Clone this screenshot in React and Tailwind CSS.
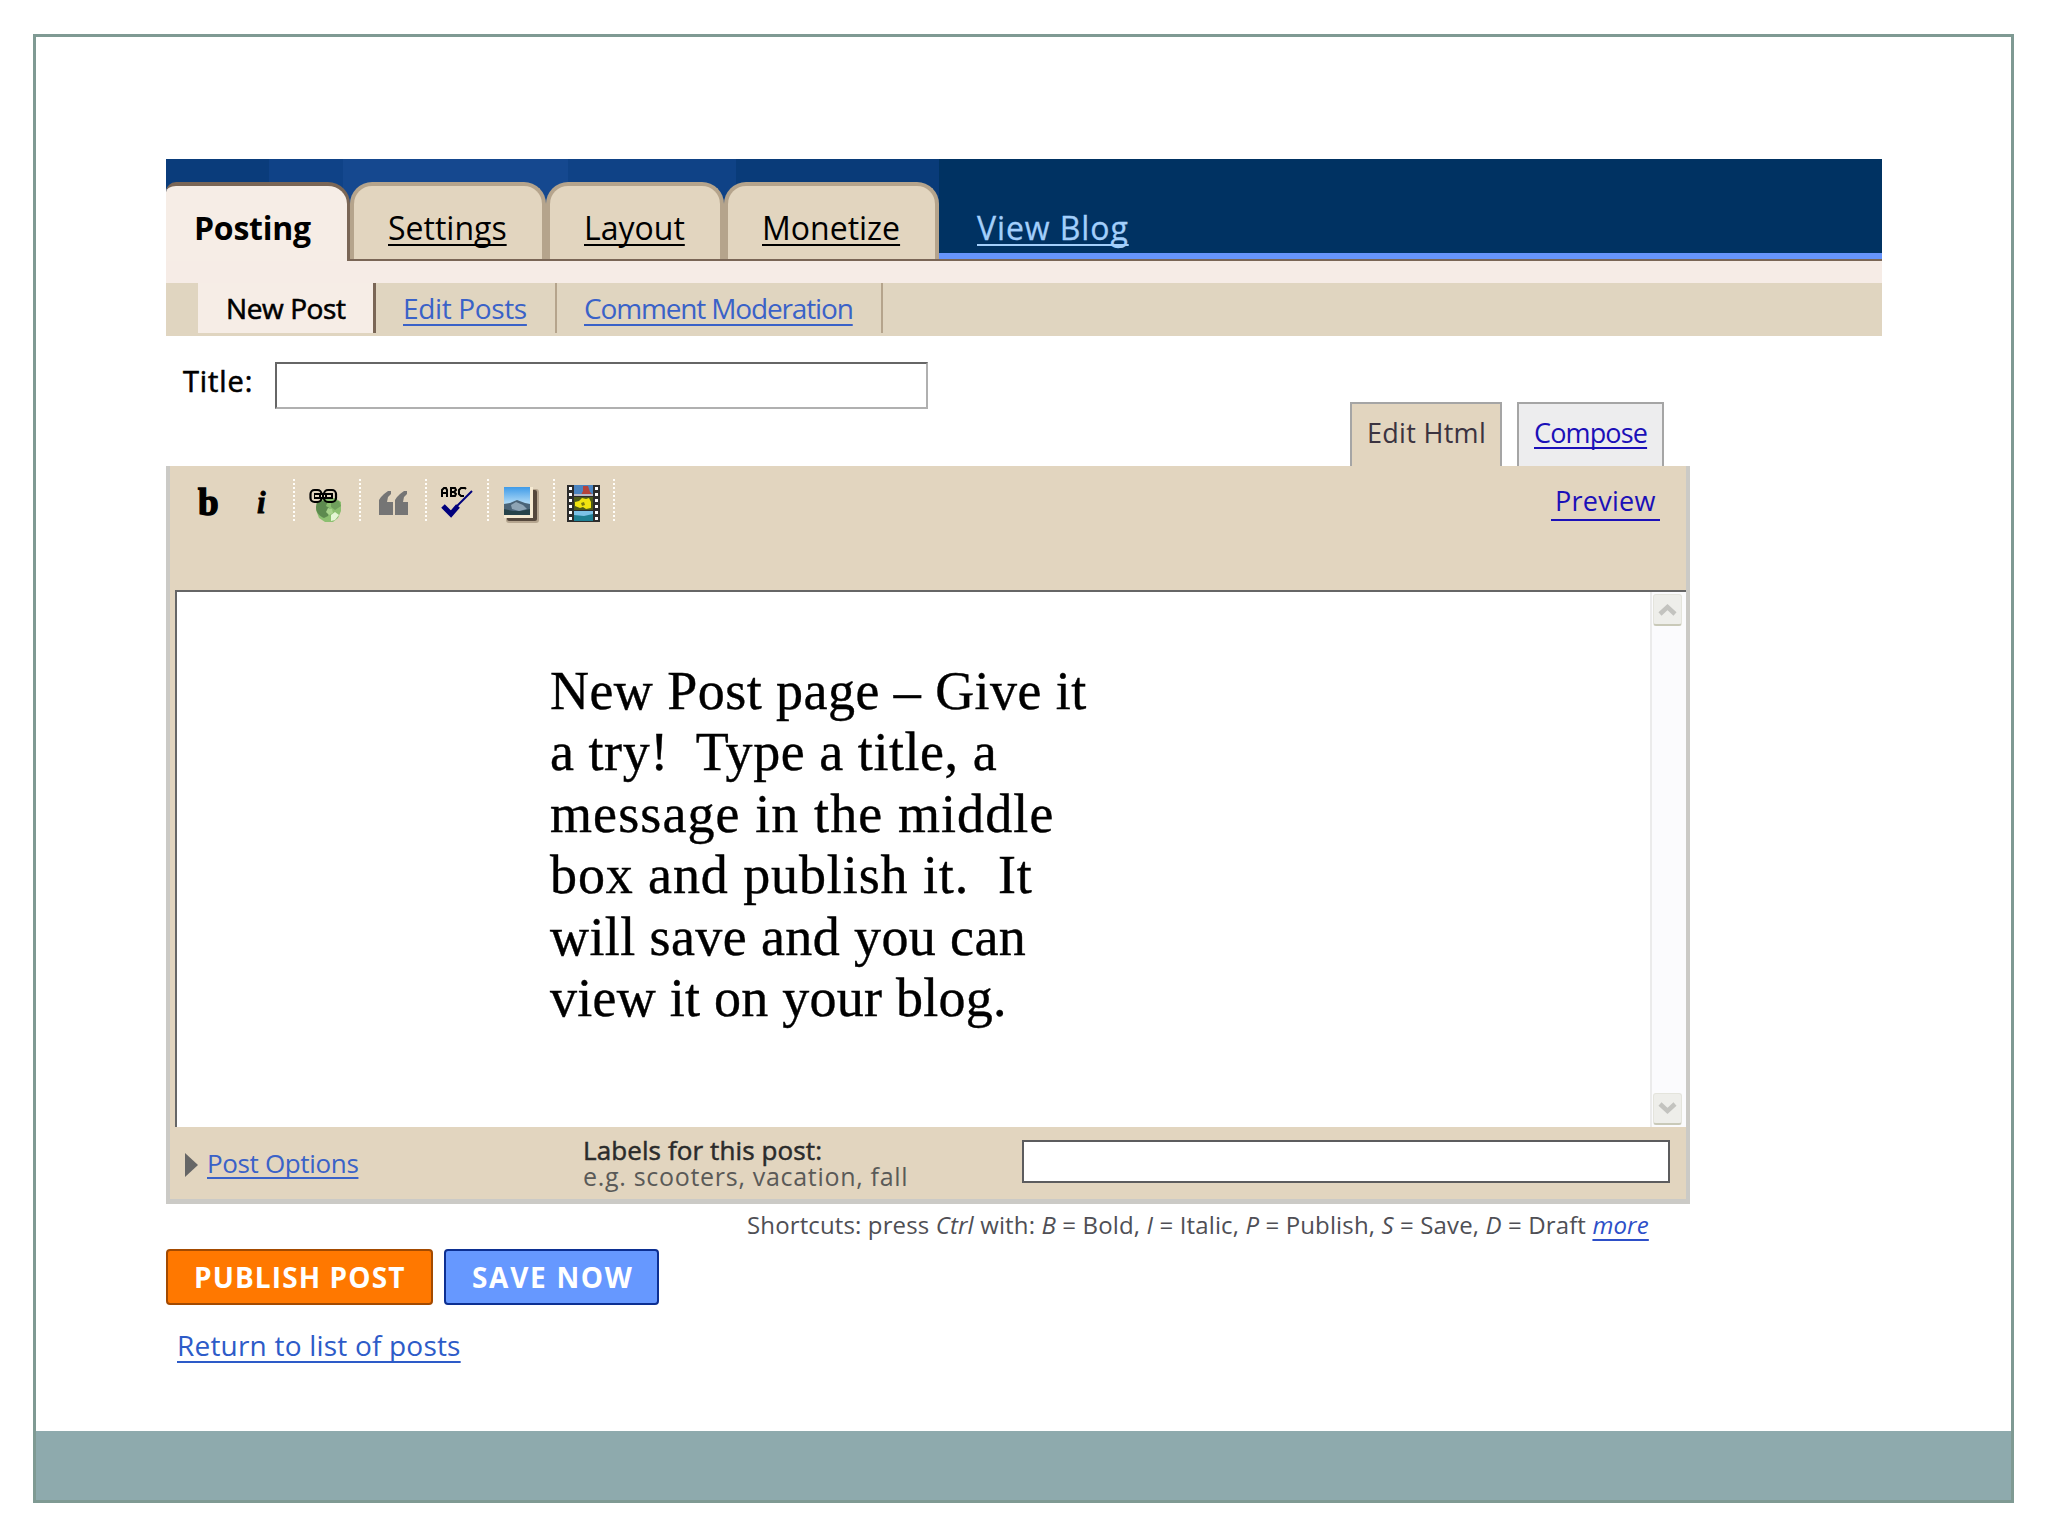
import React from "react";

const T = ({ className = "", children }) => (
  <span className={"inline-block whitespace-pre " + className}>{children}</span>
);

const LINK = " underline decoration-2 [text-decoration-skip-ink:none] ";

const Tab = ({ className, children }) => (
  <div className={"h-[77px] shrink-0 rounded-t-[22px] border-x-4 border-t-4 border-[#b5a48c] bg-[#e2d5bf] pt-[22px] text-[32px] leading-[40px] text-black " + className}>
    {children}
  </div>
);

const Divider = () => (
  <div className="h-[42px] w-[2px] shrink-0 bg-[repeating-linear-gradient(180deg,#fffdf8_0_2px,transparent_2px_4px)]" />
);

const LinkIcon = () => (
  <svg width="34" height="35" viewBox="0 0 34 35">
    <path d="M14 10h12l6 4v9l-3 7-5 4h-8l-6-4-3-8 1-7z" fill="#8cbf70" />
    <path d="M8 13h11l-2 5 5 3-3 7-4 2c-5-2-8-6-8-11z" fill="#5d8a4f" />
    <path d="M22 13h8l2 5-6 4-4-3z" fill="#6f9f5c" />
    <path d="M22 27l4-3 4 3-4 5-4 1z" fill="#e4f6d4" />
    <path d="M19 20l4 1 1 4-4 2-3-3z" fill="#a9d48d" />
    <g fill="none" stroke="#000" strokeWidth="2.2">
      <rect x="1.500" y="2" width="11" height="12" rx="4" />
      <rect x="15" y="2" width="12" height="12" rx="4" />
      <path d="M5 8h19" strokeWidth="6" />
      <path d="M6 8h4M12 8h1M15 8h1M18 8h4" stroke="#e2d5bf" strokeWidth="2" />
    </g>
  </svg>
);

const QuoteIcon = () => (
  <svg width="30" height="25" viewBox="0 0 30 25" fill="#757575">
    <path d="M0 24V9l2-3 3-3 4-3h3v3l-3 3-1 5h6v13z" />
    <path d="M16 24V9l2-3 3-3 4-3h3v3l-3 3-1 5h5v13z" />
  </svg>
);

const SpellIcon = () => (
  <svg width="32" height="33" viewBox="0 0 32 33" fill="none">
    <g stroke="#000" strokeWidth="2">
      <path d="M1 11V4l2-2h2l1 2v7M1 7h5" />
      <path d="M10 1v10M10 2h4l1 2-2 2h-3M13 6l2 2-1 2h-4" />
      <path d="M25 3l-1-1h-4l-2 2v4l2 2h3" />
    </g>
    <path d="M31 5L13 23" stroke="#00007c" strokeWidth="2" />
    <path d="M2 20l8 8 7-8" stroke="#00007c" strokeWidth="5" />
  </svg>
);

const PhotoIcon = () => (
  <svg width="37" height="38" viewBox="0 0 37 38">
    <defs>
      <linearGradient id="sky" x1="0" y1="0" x2="0" y2="1">
        <stop offset="0" stopColor="#3f9be8" />
        <stop offset="0.55" stopColor="#a9d6f5" />
        <stop offset="1" stopColor="#a9d6f5" />
      </linearGradient>
    </defs>
    <rect x="3" y="3" width="33" height="34" rx="3" fill="#b5a58f" />
    <rect x="4" y="4" width="30" height="31" rx="2" fill="#55483c" />
    <path d="M1 1h29v31H1z" fill="#f6ead2" />
    <path d="M1 1h26v28H1z" fill="url(#sky)" />
    <path d="M1 18l6-1 7-3 8 3 5 1v11H1z" fill="#4a6377" />
    <path d="M8 19l5-3 7 3 4 4-8 2-7-2z" fill="#8ea4b5" />
    <path d="M1 23l9 2h8l9-2v6H1z" fill="#27434a" />
  </svg>
);

const FilmIcon = () => (
  <svg width="33" height="37" viewBox="0 0 33 37">
    <path d="M0 0h33v37H0z" fill="#2c2c2c" />
    <path d="M7 0h19v11H7z" fill="#4b84c0" />
    <path d="M16 1h5l2 6 3 3H14l2-4z" fill="#b5433a" />
    <path d="M7 9h19v2H7z" fill="#b9b9c6" />
    <path d="M7 12h19v13H7z" fill="#4e5a18" />
    <path d="M8 17l4-1 3-3 4 1 3-1 2 4v6l-5 1-3-2-3 1-5-2z" fill="#f1e410" />
    <path d="M14 18l3-1 1 3-3 1z" fill="#7d7c10" />
    <path d="M7 26h19v10H7z" fill="#1f7f93" />
    <path d="M7 26h19v3l-9 2-10-1z" fill="#7cc1e6" />
    {[2, 8, 14, 20, 26, 32].map((y) => (
      <g key={y} fill="#fff">
        <path d={`M2 ${y}h3v3h-3z`} />
        <path d={`M28 ${y}h3v3h-3z`} />
      </g>
    ))}
  </svg>
);

const ScrollButton = ({ d }) => (
  <div className="flex h-[32px] w-[29px] items-center justify-center rounded-[3px] border border-b-2 border-[#e4e4dc] border-b-[#c9c9b8] bg-[#eeeeea]">
    <svg width="19" height="13" viewBox="0 0 19 13" fill="none" stroke="#c3c3bf" strokeWidth="4.500">
      <path d={d} />
    </svg>
  </div>
);

const MESSAGE = [
  ["New Post page – Give it", "tracking-[0.45px]"],
  ["a try!  Type a title, a", "tracking-[0.55px]"],
  ["message in the middle", "tracking-[1.1px]"],
  ["box and publish it.  It", "tracking-[0.9px]"],
  ["will save and you can", "tracking-[0.4px]"],
  ["view it on your blog.", "tracking-[0.25px]"],
];

export default function App() {
  return (
    <div className="h-[1536px] w-[2048px] overflow-hidden bg-white pl-[33px] pt-[34px] font-['Open_Sans','Noto_Sans',sans-serif]">
      <div className="flex h-[1469px] w-[1981px] flex-col border-[3px] border-[#7f9a93]">
        <div className="pl-[130px] pt-[122px]">
          <header className="flex h-[102px] w-[1716px] items-end bg-[linear-gradient(90deg,#0a3c7b_0_103px,#0f4287_103px_177px,#15488f_177px_402px,#0f4286_402px_570px,#093b79_570px_773px,#003262_773px)]">
            <div className="h-[79px] w-[184px] shrink-0 rounded-tl-[10px] rounded-tr-[22px] border-r-[3px] border-t-4 border-[#7a6656] bg-[#f6ede6] pl-[28px] pt-[22px] text-[32px] font-bold leading-[40px]">
              <T className="tracking-[-0.25px]">Posting</T>
            </div>
            <div className="flex h-[79px] min-w-0 flex-1 items-end border-b-2 border-[#7a6656]">
              <Tab className="w-[196px] pl-[34px]"><T className={LINK + "underline-offset-[4px]"}>Settings</T></Tab>
              <Tab className="w-[178px] pl-[34px]"><T className={LINK + "underline-offset-[4px]"}>Layout</T></Tab>
              <Tab className="w-[215px] pl-[34px]"><T className={LINK + "underline-offset-[4px]"}>Monetize</T></Tab>
              <div className="h-[77px] flex-1 border-b-[6px] border-[#6694fb] pl-[38px] pt-[26px] text-[32px] leading-[40px] text-[#a3cffb] [-webkit-text-stroke:0.3px]">
                <T className={LINK + "tracking-[0.9px] underline-offset-[4px]"}>View Blog</T>
              </div>
            </div>
          </header>
          <div className="h-[22px] w-[1716px] bg-[#f6ece6]" />
          <nav className="flex h-[53px] w-[1716px] bg-[#e0d5c0] pl-[32px] text-[28px] leading-[50px] text-[#3a62c8]">
            <div className="h-[50px] w-[178px] border-r-[3px] border-[#7a6656] bg-[#f6ede6] pl-[28px] text-black [-webkit-text-stroke:0.6px_#000]"><T className="tracking-[-0.4px]">New Post</T></div>
            <div className="h-[50px] w-[181px] border-r-2 border-[#b5a48c] pl-[27px]"><T className={LINK + "tracking-[-0.35px] underline-offset-[5px]"}>Edit Posts</T></div>
            <div className="h-[50px] w-[326px] border-r-2 border-[#b5a48c] pl-[27px]"><T className={LINK + "tracking-[-1.15px] underline-offset-[5px]"}>Comment Moderation</T></div>
          </nav>

          <div className="flex h-[130px] w-[1524px] items-start pt-[25px]">
            <div className="w-[109px] pl-[17px] text-[29px] leading-[39px] [-webkit-text-stroke:0.6px_#000]"><T className="tracking-[0.9px]">Title:</T></div>
            <div className="mt-[1px] h-[47px] w-[653px] border-2 border-b-[#b0b0b0] border-l-[#666] border-r-[#b0b0b0] border-t-[#666] bg-white" />
            <div className="ml-[422px] mt-[41px] h-[64px] w-[152px] border-x-2 border-t-2 border-[#a5a5a5] bg-[#e2d5bf] pl-[15px] pt-[9px] text-[27px] leading-[40px] text-[#3b3340]"><T className="tracking-[0.3px]">Edit Html</T></div>
            <div className="ml-[15px] mt-[41px] h-[64px] w-[147px] border-x-2 border-t-2 border-[#a5a5a5] bg-[#ededee] pl-[15px] pt-[9px] text-[27px] leading-[40px] text-[#1b10b8]"><T className={LINK + "tracking-[-0.85px] underline-offset-[4px]"}>Compose</T></div>
          </div>

          <section className="h-[738px] w-[1524px] border-x-[4px] border-b-[5px] border-[#cbcac6] bg-[#e2d5bf]">
            <div className="flex h-[124px] items-start pt-[13px]">
              <div className="flex h-[42px] w-[123px] items-center pl-[28px] pt-[4px] font-['Liberation_Serif',serif] text-[37px] font-bold leading-none text-black">
                <span className="w-[59px] [-webkit-text-stroke:1.5px_#000]">b</span>
                <span className="text-[31px] italic [-webkit-text-stroke:0.8px_#000]">i</span>
              </div>
              <Divider />
              <div className="w-[64px] pl-[14px] pt-[9px]"><LinkIcon /></div>
              <Divider />
              <div className="w-[64px] pl-[18px] pt-[12px]"><QuoteIcon /></div>
              <Divider />
              <div className="w-[60px] pl-[14px] pt-[7px]"><SpellIcon /></div>
              <Divider />
              <div className="w-[64px] pl-[14px] pt-[7px]"><PhotoIcon /></div>
              <Divider />
              <div className="w-[58px] pl-[12px] pt-[6px]"><FilmIcon /></div>
              <Divider />
              <div className="ml-[936px] mt-[3px] h-[39px] w-[109px] border-b-2 border-[#1b10b8] pl-[4px] text-[27px] leading-[38px] text-[#1b10b8]"><T className="tracking-[0.25px]">Preview</T></div>
            </div>
            <div className="ml-[5px] flex h-[537px] w-[1511px] justify-between border-l-2 border-t-2 border-[#666] bg-white">
              <div className="pl-[373px] pt-[69px] font-['Liberation_Serif',serif] text-[54px] leading-[61.4px] text-black [-webkit-text-stroke:0.4px_#000]">
                {MESSAGE.map(([line, tracking]) => (
                  <div key={line}><T className={tracking}>{line}</T></div>
                ))}
              </div>
              <div className="flex w-[36px] flex-col items-start justify-between border-l-2 border-[#ebebeb] bg-[#fbfbfd] py-[2px] pl-px">
                <ScrollButton d="M2 11l7.500-7 7.500 7" />
                <ScrollButton d="M2 2l7.500 7 7.500-7" />
              </div>
            </div>
            <div className="flex h-[72px]">
              <div className="flex w-[413px] pl-[15px] pt-[26px]">
                <svg width="13" height="24" viewBox="0 0 13 24"><path d="M0 0l13 12L0 24z" fill="#666" /></svg>
                <div className="-mt-[10px] pl-[9px] text-[26px] leading-[40px] text-[#3a62c8]"><T className={LINK + "tracking-[-0.35px] underline-offset-[4px]"}>Post Options</T></div>
              </div>
              <div className="w-[439px] pt-[10px] text-[26px] leading-[26px]">
                <div className="h-[26px] text-[#2b2b2b] [-webkit-text-stroke:0.5px_#2b2b2b]"><T className="tracking-[0.1px]">Labels for this post:</T></div>
                <div className="h-[26px] text-[25px] text-[#5a5a58]"><T className="leading-[25px] tracking-[0.7px]">e.g. scooters, vacation, fall</T></div>
              </div>
              <div className="mt-[13px] h-[43px] w-[648px] border-2 border-[#5c5c5e] bg-white" />
            </div>
          </section>

          <div className="h-[45px] pl-[581px] text-[24px] leading-[42px] text-[#4f4f55]">
            <T className="tracking-[0.13px]">Shortcuts: press <i>Ctrl</i> with: <i>B</i> = Bold, <i>I</i> = Italic, <i>P</i> = Publish, <i>S</i> = Save, <i>D</i> = Draft <i className={LINK + "text-[#2d4fc8] underline-offset-[5px]"}>more</i></T>
          </div>
          <div className="flex gap-[11px] text-[28px] font-bold leading-[52px] text-white">
            <div className="h-[56px] w-[267px] rounded-[4px] border-2 border-[#a34a00] bg-[#ff7800] pl-[26px]"><T className="tracking-[1.1px]">PUBLISH POST</T></div>
            <div className="h-[56px] w-[215px] rounded-[4px] border-2 border-[#0c2f92] bg-[#6698ff] pl-[26px]"><T className="tracking-[1.7px]">SAVE NOW</T></div>
          </div>
          <div className="pl-[11px] pt-[20px] text-[28px] leading-[40px] text-[#2d5bc8]"><T className={LINK + "tracking-[0.2px] underline-offset-[5px]"}>Return to list of posts</T></div>
        </div>
        <footer className="mt-auto h-[69px] bg-[#8eaaad]" />
      </div>
    </div>
  );
}
